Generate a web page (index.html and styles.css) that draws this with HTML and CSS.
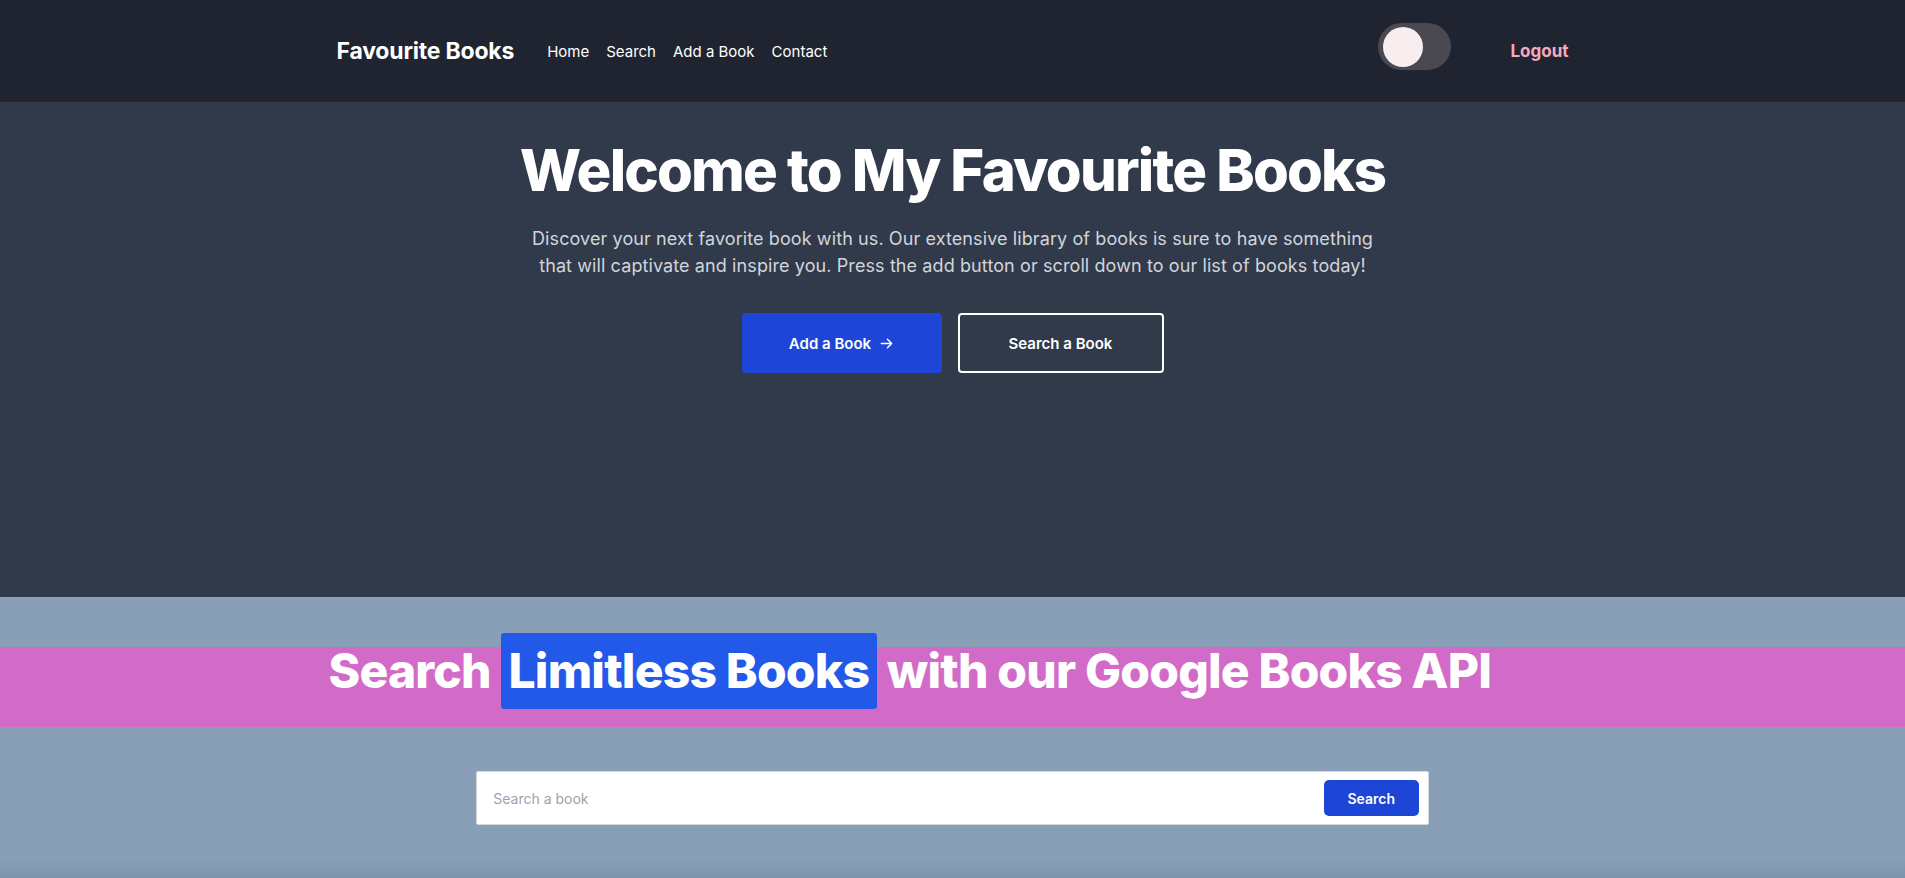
FILE: index.html
```html
<!DOCTYPE html>
<html lang="en">
<head>
<meta charset="utf-8">
<title>Favourite Books</title>
<link rel="stylesheet" href="styles.css">
</head>
<body>
<header class="nav">
  <div class="nav-inner">
    <div class="nav-left">
      <a class="brand" href="#">Favourite Books</a>
      <nav class="links">
        <a href="#">Home</a>
        <a href="#">Search</a>
        <a href="#">Add a Book</a>
        <a href="#">Contact</a>
      </nav>
    </div>
    <div class="nav-right">
      <div class="toggle"><span class="knob"></span></div>
      <a class="logout" href="#">Logout</a>
    </div>
  </div>
</header>

<section class="hero">
  <h1>Welcome to My Favourite Books</h1>
  <p>Discover your next favorite book with us. Our extensive library of books is sure to have something that will captivate and inspire you. Press the add button or scroll down to our list of books today!</p>
  <div class="actions">
    <a class="btn primary" href="#">Add a Book
      <svg class="arrow" viewBox="0 0 16 16" width="15" height="15" fill="none" stroke="currentColor" stroke-width="1.6" stroke-linecap="round" stroke-linejoin="round"><path d="M2.5 8h11M9 3.5 13.5 8 9 12.5"/></svg>
    </a>
    <a class="btn outline" href="#">Search a Book</a>
  </div>
</section>

<section class="search-section">
  <div class="banner">
    <div class="banner-inner">
      <h2>Search <span class="hl">Limitless Books</span> with our Google Books API</h2>
    </div>
  </div>
  <form class="search-box">
    <input type="text" placeholder="Search a book">
    <button type="button">Search</button>
  </form>
</section>
</body>
</html>
```

FILE: styles.css
```css
* { box-sizing: border-box; }
html, body { margin: 0; padding: 0; }
body {
  font-family: Inter, "Noto Sans", sans-serif;
  background: #899fb7;
  color: #fff;
  min-height: 878px;
  overflow: hidden;
}
a { color: inherit; text-decoration: none; }

.nav {
  background: #1f2430;
  height: 102px;
}
.nav-inner {
  max-width: 1280px;
  margin: 0 auto;
  padding: 0 24px;
  height: 100%;
  display: flex;
  align-items: center;
  justify-content: space-between;
}
.nav-left { display: flex; align-items: center; }
.brand {
  font-size: 23px;
  font-weight: 700;
  letter-spacing: -0.2px;
  margin-right: 33px;
}
.links { display: flex; gap: 17px; }
.links a { font-size: 15px; font-weight: 400; }
.nav-right { display: flex; align-items: center; gap: 59px; }
.toggle {
  width: 73px;
  height: 47px;
  margin-bottom: 9px;
  border-radius: 24px;
  background: #4a4851;
  display: flex;
  align-items: center;
  padding-left: 5px;
}
.knob {
  width: 40px;
  height: 40px;
  border-radius: 50%;
  background: #f8eef0;
}
.logout {
  color: #f7a9bf;
  font-weight: 700;
  font-size: 17px;
}

.hero {
  background: #313a4a;
  height: 495px;
  padding-top: 38px;
  display: flex;
  flex-direction: column;
  align-items: center;
  text-align: center;
}
.hero h1 {
  margin: 0;
  font-size: 58px;
  line-height: 60px;
  font-weight: 800;
  letter-spacing: -1.8px;
}
.hero p {
  margin: 25px 0 0;
  max-width: 870px;
  font-size: 18px;
  line-height: 27px;
  letter-spacing: 0.1px;
  color: #d1d5db;
}
.actions {
  margin-top: 34px;
  display: flex;
  gap: 16px;
}
.btn {
  height: 60px;
  display: flex;
  align-items: center;
  justify-content: center;
  gap: 8px;
  font-size: 15px;
  font-weight: 600;
  border-radius: 4px;
}
.btn.primary { background: #1d45d6; width: 200px; }
.btn.outline { border: 2px solid #fff; width: 206px; }
.arrow { display: block; }

.search-section {
  padding-top: 50px;
  height: 282px;
  background: linear-gradient(to bottom, #899fb7 0, #899fb7 262px, #7d92ab 282px);
}
.banner {
  display: flow-root;
  background: #d26bc8;
  height: 80px;
}
.banner-inner {
  max-width: 1280px;
  margin: 0 auto;
  padding: 0 16px;
}
.banner h2 {
  margin: -14px 0 0;
  font-size: 48px;
  line-height: 76px;
  font-weight: 800;
  letter-spacing: -0.8px;
  white-space: nowrap;
}
.hl {
  display: inline-block;
  background: #2359e9;
  border-radius: 3px;
  padding: 0 8px;
}

.search-box {
  width: 50%;
  margin: 44px auto 0;
  height: 54px;
  background: #fff;
  border: 1px solid #d4d7dc;
  border-radius: 2px;
  display: flex;
  align-items: center;
  padding: 0 9px 0 16px;
}
.search-box input {
  flex: 1;
  border: none;
  outline: none;
  font-family: inherit;
  font-size: 14px;
  color: #374151;
  background: transparent;
  padding: 0;
}
.search-box input::placeholder { color: #9ca3af; }
.search-box button {
  width: 95px;
  height: 36px;
  border: none;
  border-radius: 5px;
  background: #1d45d6;
  color: #fff;
  font-family: inherit;
  font-size: 14px;
  font-weight: 600;
}
```
